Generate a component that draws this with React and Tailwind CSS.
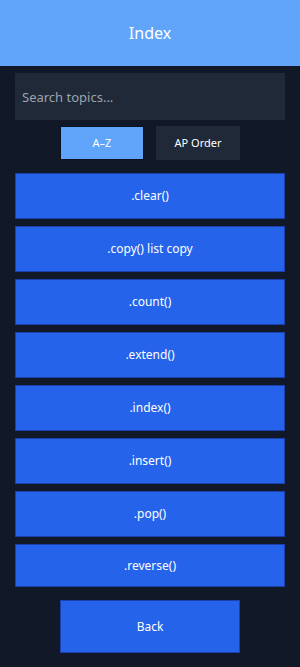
import { useState } from "react";

export default function App() {
  const [sort, setSort] = useState("az");
  const [q, setQ] = useState("");

  const topics = [
    ".clear()",
    ".copy() list copy",
    ".count()",
    ".extend()",
    ".index()",
    ".insert()",
    ".pop()",
    ".reverse()",
  ];

  return (
    <div
      className="min-h-[667px] w-full bg-[#111827] text-white"
      style={{ fontFamily: '"Noto Sans", "Open Sans", sans-serif' }}
    >
      {/* Header */}
      <div className="h-[66px] bg-[#60a5fa] flex items-center justify-center">
        <h1 className="text-[16px] font-normal">Index</h1>
      </div>

      <div className="px-[15px] pt-[7px]">
        {/* Search */}
        <input
          value={q}
          onChange={(e) => setQ(e.target.value)}
          placeholder="Search topics..."
          className="w-full h-[47px] bg-[#1f2937] px-[7px] text-[13px] text-white placeholder-[#9ca3af] outline-none"
        />

        {/* Sort toggles */}
        <div className="flex justify-center gap-[12px] mt-[6px]">
          <button
            onClick={() => setSort("az")}
            className={
              "w-[84px] h-[34px] text-[11px] " +
              (sort === "az" ? "bg-[#60a5fa] border border-[#0b1220]" : "bg-[#1f2937]")
            }
          >
            A–Z
          </button>
          <button
            onClick={() => setSort("ap")}
            className={
              "w-[84px] h-[34px] text-[11px] " +
              (sort === "ap" ? "bg-[#60a5fa] border border-[#0b1220]" : "bg-[#1f2937]")
            }
          >
            AP Order
          </button>
        </div>

        {/* Topics (scroll area) */}
        <div className="h-[414px] overflow-hidden mt-[13px] flex flex-col gap-[7px]">
          {topics.map((t, i) => (
            <button
              key={t}
              className={
                "w-full shrink-0 bg-[#2563eb] border border-[#1e40af] text-[12px] flex items-center justify-center " +
                (i === topics.length - 1 ? "h-[43px]" : "h-[46px]")
              }
            >
              {t}
            </button>
          ))}
        </div>

        {/* Back */}
        <div className="flex justify-center mt-[13px] pb-[14px]">
          <button className="w-[180px] h-[53px] bg-[#2563eb] border border-[#1e40af] text-[12px]">
            Back
          </button>
        </div>
      </div>
    </div>
  );
}
